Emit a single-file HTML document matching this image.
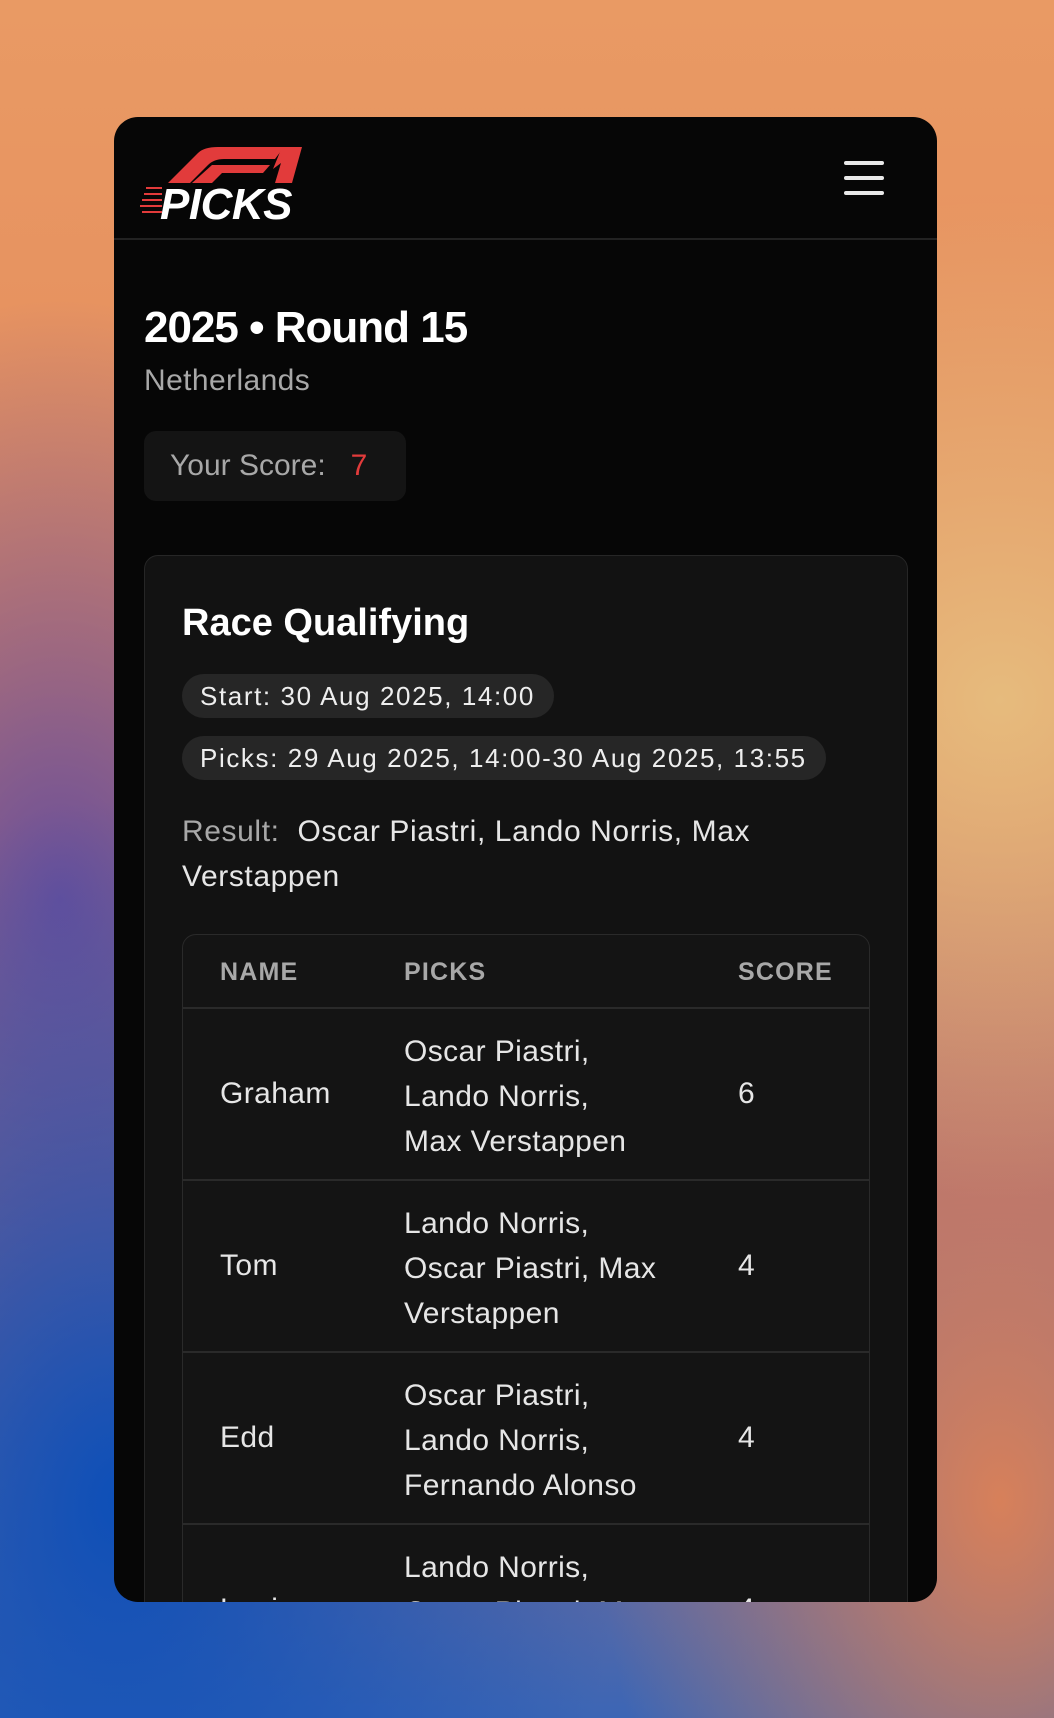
<!DOCTYPE html>
<html><head><meta charset="utf-8"><style>
*{margin:0;padding:0;box-sizing:border-box}
body{width:1054px;height:1718px;overflow:hidden;font-family:"Liberation Sans",sans-serif;position:relative;
background:
radial-gradient(ellipse 500px 700px at 120px 1500px,#0d4fb8 0%,rgba(13,79,184,0) 100%),
radial-gradient(ellipse 400px 600px at 60px 900px,#6a4f9a 0%,rgba(106,79,154,0) 100%),
radial-gradient(ellipse 500px 500px at 1000px 700px,#e6bb7d 0%,rgba(230,187,125,0) 100%),
radial-gradient(ellipse 400px 600px at 1000px 1500px,#d7805a 0%,rgba(215,128,90,0) 100%),
linear-gradient(180deg,#e99a64 0%,#e48a5c 40%,#a7707a 70%,#3c66b5 100%);}
.card{position:absolute;left:114px;top:117px;width:823px;height:1485px;background:#060606;border-radius:24px;overflow:hidden;color:#fff}
.hdr{position:absolute;left:0;top:0;width:100%;height:123px;border-bottom:2px solid #222}
.ham{position:absolute;left:730px;width:40px;height:4px;background:#e8e8e8;border-radius:2px}
.a{position:absolute;white-space:nowrap}
.pill{position:absolute;height:44px;background:#262626;border-radius:22px;font-size:26px;line-height:44px;padding-left:18px;color:#eee;letter-spacing:1.6px}
.inner{position:absolute;left:30px;top:438px;width:764px;height:1100px;background:#121212;border:1px solid #262626;border-radius:14px}
.tbl{position:absolute;left:37px;top:378px;width:688px;height:800px;border:1px solid #2a2a2a;border-radius:14px;background:#141414}
.row{position:absolute;left:0;width:100%;border-top:2px solid #2a2a2a;font-size:30px;color:#e6e6e6;letter-spacing:0.4px}
.row .n{position:absolute;left:37px}
.row .p{position:absolute;left:221px;line-height:45px}
.row .s{position:absolute;left:555px}
</style></head><body>
<div class="card">
 <div class="hdr">
  <svg class="a" style="left:18px;top:22px" width="180" height="84" viewBox="0 0 180 84">
   <g fill="#e23b3b">
    <path d="M36 44 L66 14 Q72 8 86 8 L152 8 L143 20 L92 20 Q82 20 76 26 L58 44 Z"/>
    <path d="M60 44 L80 26 L138 26 L131 34 L90 34 L80 44 Z"/>
    <path d="M150 8 L170 8 L160 44 L143 44 L149 24 L141 30 Z"/>
    <rect x="14" y="48" width="16" height="2"/><rect x="12" y="54" width="18" height="2"/><rect x="10" y="60" width="20" height="2"/><rect x="8" y="66" width="22" height="2"/><rect x="10" y="72" width="20" height="2"/>
   </g>
   <text x="28" y="80" font-family="Liberation Sans" font-weight="bold" font-style="italic" font-size="44" fill="#fff" letter-spacing="-0.5">PICKS</text>
  </svg>
  <div class="ham" style="top:44px"></div><div class="ham" style="top:59px"></div><div class="ham" style="top:74px"></div>
 </div>
 <div class="a" style="left:30px;top:186px;font-size:44px;font-weight:bold;letter-spacing:-1px">2025 • Round 15</div>
 <div class="a" style="left:30px;top:247px;font-size:30px;color:#a8a8a8;letter-spacing:0.4px">Netherlands</div>
 <div class="a" style="left:30px;top:314px;width:262px;height:70px;background:#141414;border-radius:12px;font-size:30px;line-height:70px;padding-left:26px;color:#a8a8a8">Your Score:&nbsp;&nbsp; <span style="color:#e23b3b">7</span></div>
 <div class="inner">
  <div class="a" style="left:37px;top:46px;font-size:38px;font-weight:bold;letter-spacing:0px">Race Qualifying</div>
  <div class="pill" style="left:37px;top:118px;width:372px">Start: 30 Aug 2025, 14:00</div>
  <div class="pill" style="left:37px;top:180px;width:644px">Picks: 29 Aug 2025, 14:00-30 Aug 2025, 13:55</div>
  <div class="a" style="left:37px;top:253px;font-size:30px;line-height:45px;color:#e6e6e6;letter-spacing:0.6px"><span style="color:#a8a8a8">Result:</span>&nbsp; Oscar Piastri, Lando Norris, Max<br>Verstappen</div>
  <div class="tbl">
   <div class="a" style="left:37px;top:23px;font-size:25px;font-weight:bold;color:#a8a8a8;letter-spacing:1.2px">NAME</div>
   <div class="a" style="left:221px;top:23px;font-size:25px;font-weight:bold;color:#a8a8a8;letter-spacing:1.2px">PICKS</div>
   <div class="a" style="left:555px;top:23px;font-size:25px;font-weight:bold;color:#a8a8a8;letter-spacing:1.2px">SCORE</div>
   <div class="row" style="top:72px;height:172px"><div class="n" style="top:68px">Graham</div><div class="p" style="top:20px">Oscar Piastri,<br>Lando Norris,<br>Max Verstappen</div><div class="s" style="top:68px">6</div></div>
   <div class="row" style="top:244px;height:172px"><div class="n" style="top:68px">Tom</div><div class="p" style="top:20px">Lando Norris,<br>Oscar Piastri, Max<br>Verstappen</div><div class="s" style="top:68px">4</div></div>
   <div class="row" style="top:416px;height:172px"><div class="n" style="top:68px">Edd</div><div class="p" style="top:20px">Oscar Piastri,<br>Lando Norris,<br>Fernando Alonso</div><div class="s" style="top:68px">4</div></div>
   <div class="row" style="top:588px;height:172px"><div class="n" style="top:68px">Louis</div><div class="p" style="top:20px">Lando Norris,<br>Oscar Piastri, Max<br>Verstappen</div><div class="s" style="top:68px">4</div></div>
  </div>
 </div>
</div>
</body></html>
